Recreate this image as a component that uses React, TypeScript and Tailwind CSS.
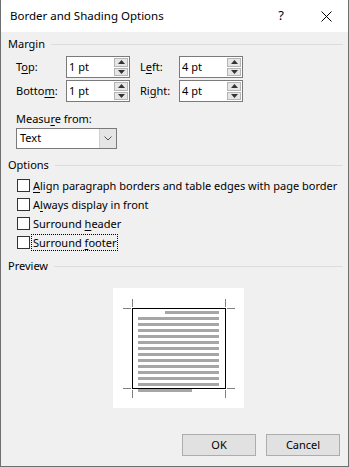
import React from 'react'

const font = { fontFamily: '"Noto Sans", "Open Sans", Arial, sans-serif' }

function U({ children }: { children: React.ReactNode }) {
  return <span className="underline underline-offset-2">{children}</span>
}

function Group({ label }: { label: string }) {
  return (
    <div className="flex items-center gap-[6px] h-[16px]">
      <span>{label}</span>
      <div className="flex-1 h-px bg-[#dcdcdc] mr-[-2px]" />
    </div>
  )
}

function Spin({ value }: { value: string }) {
  return (
    <div className="flex w-[64px] h-[22px] border border-[#7a7a7a] bg-white">
      <div className="flex-1 pl-[2px] flex items-center">{value}</div>
      <div className="w-[16px] flex flex-col gap-px p-px">
        <div className="flex-1 bg-[#e6e6e6] border border-[#b5b5b5] flex items-center justify-center">
          <svg width="7" height="4" viewBox="0 0 7 4">
            <path d="M0 4 L3.5 0 L7 4 Z" fill="#333" />
          </svg>
        </div>
        <div className="flex-1 bg-[#e6e6e6] border border-[#b5b5b5] flex items-center justify-center">
          <svg width="7" height="4" viewBox="0 0 7 4">
            <path d="M0 0 L3.5 4 L7 0 Z" fill="#333" />
          </svg>
        </div>
      </div>
    </div>
  )
}

function Check({ children, focus }: { children: React.ReactNode; focus?: boolean }) {
  return (
    <div className="flex items-center h-[19px] pl-[9px] whitespace-nowrap">
      <div className="w-[13px] h-[13px] border border-[#333] bg-white" />
      <span className={`ml-[2px] px-px leading-[15px] ${focus ? 'outline outline-1 outline-dotted outline-black' : ''}`}>
        {children}
      </span>
    </div>
  )
}

function Preview() {
  const lines: React.ReactNode[] = []
  for (let i = 0; i < 14; i++) {
    const y = 311 - 288 + i * 6
    const x1 = i === 0 ? 165 - 113 : 138 - 113
    const x2 = i === 13 ? 192 - 113 : 219 - 113
    lines.push(<rect key={i} x={x1} y={y} width={x2 - x1} height={3} fill="#a6a6a6" />)
  }
  const l = 132 - 113 + 0.5
  const r = 225 - 113 + 0.5
  const t = 308 - 288 + 0.5
  const b = 388 - 288 + 0.5
  return (
    <div className="flex justify-center pt-[14px] pl-[7px]">
      <svg width="131" height="120" viewBox="0 0 131 120" className="bg-white">
        <rect x={l} y={t} width={r - l} height={b - t} fill="none" stroke="#000" />
        {lines}
        <g stroke="#000" strokeDasharray="1 1">
          <path d={`M${l - 9} ${t} H${l - 1} M${l} ${t - 9} V${t - 1}`} />
          <path d={`M${r + 2} ${t} H${r + 10} M${r} ${t - 9} V${t - 1}`} />
          <path d={`M${l - 9} ${b} H${l - 1} M${l} ${b + 2} V${b + 10}`} />
          <path d={`M${r + 2} ${b} H${r + 10} M${r} ${b + 2} V${b + 10}`} />
        </g>
      </svg>
    </div>
  )
}

export default function App() {
  return (
    <div style={font} className="w-[349px] h-[467px] flex flex-col text-[11px] text-black bg-[#f0f0f0] border-x border-b border-[#6f6f6f]">
      <div className="h-[32px] bg-white flex items-center pl-[9px] shrink-0 text-[11.5px]">
        <span className="flex-1">Border and Shading Options</span>
        <span className="w-[14px] text-center mr-[33px] text-[13px]">?</span>
        <svg width="11" height="11" viewBox="0 0 11 11" className="mr-[16px]">
          <path d="M0.5 0.5 L10.5 10.5 M10.5 0.5 L0.5 10.5" stroke="#000" strokeWidth="1" />
        </svg>
      </div>

      <div className="flex-1 flex flex-col px-[7px] pt-[4px]">
        <Group label="Margin" />
        <div className="mt-[4px] pl-[8px] grid grid-cols-[50px_64px_10px_39px_64px] gap-y-[2px] items-center">
          <span>T<U>o</U>p:</span>
          <Spin value="1 pt" />
          <span />
          <span>L<U>e</U>ft:</span>
          <Spin value="4 pt" />
          <span>Botto<U>m</U>:</span>
          <Spin value="1 pt" />
          <span />
          <span>Ri<U>g</U>ht:</span>
          <Spin value="4 pt" />
        </div>

        <div className="mt-[8px] pl-[8px] leading-[17px]">
          Measu<U>r</U>e from:
        </div>
        <div className="ml-[8px] mt-[1px] w-[101px] h-[21px] flex border border-[#7a7a7a] bg-white">
          <div className="flex-1 flex items-center pl-[3px]">Text</div>
          <div className="w-[17px] bg-[#e5e5e5] border-l border-[#cfcfcf] flex items-center justify-center">
            <svg width="8" height="5" viewBox="0 0 8 5">
              <path d="M0.5 0.5 L4 4 L7.5 0.5" fill="none" stroke="#555" />
            </svg>
          </div>
        </div>

        <div className="mt-[8px]">
          <Group label="Options" />
        </div>
        <div className="mt-[3px] flex flex-col">
          <Check>
            <U>A</U>lign paragraph borders and table edges with page border
          </Check>
          <Check>
            A<U>l</U>ways display in front
          </Check>
          <Check>
            Surround <U>h</U>eader
          </Check>
          <Check focus>
            Surround <U>f</U>ooter
          </Check>
        </div>

        <div className="mt-[6px]">
          <Group label="Preview" />
        </div>
        <Preview />

        <div className="mt-auto mb-[10px] flex justify-end gap-[10px] pr-[1px]">
          <button className="w-[74px] h-[22px] bg-[#e1e1e1] border border-[#adadad]">OK</button>
          <button className="w-[74px] h-[22px] bg-[#e1e1e1] border border-[#adadad]">Cancel</button>
        </div>
      </div>
    </div>
  )
}
